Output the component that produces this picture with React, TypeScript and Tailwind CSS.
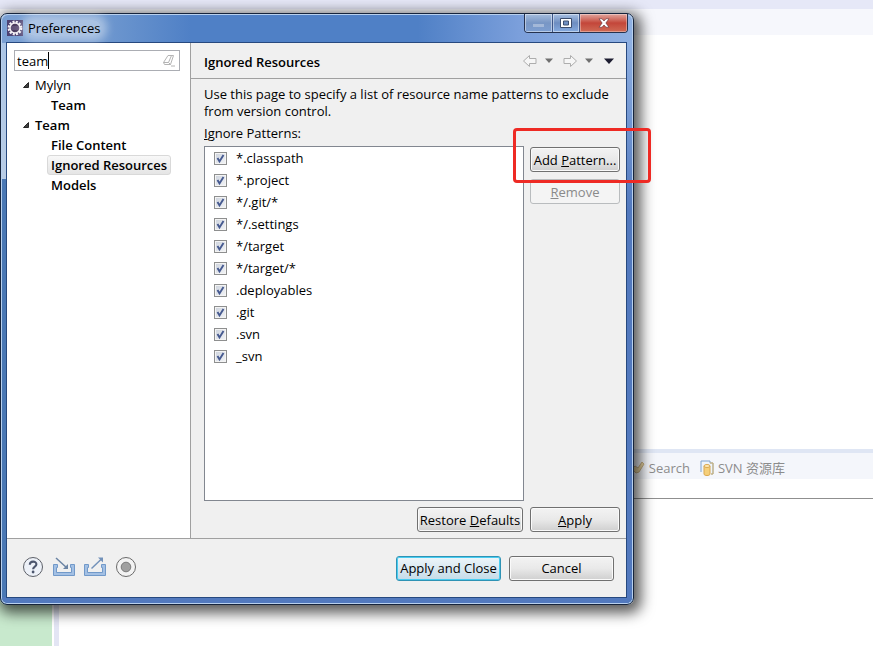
import type { ReactNode } from 'react';

const patterns = [
  '*.classpath',
  '*.project',
  '*/.git/*',
  '*/.settings',
  '*/target',
  '*/target/*',
  '.deployables',
  '.git',
  '.svn',
  '_svn',
];

const tree = [
  { name: 'Mylyn', matches: false, children: ['Team'] },
  {
    name: 'Team',
    matches: true,
    children: ['File Content', 'Ignored Resources', 'Models'],
  },
];

const selected = 'Ignored Resources';

function Button({
  children,
  className,
  disabled,
}: {
  children: ReactNode;
  className: string;
  disabled?: boolean;
}) {
  return (
    <button
      type="button"
      disabled={disabled}
      className={`h-[25px] rounded-[3px] border text-center whitespace-nowrap ${className}`}
    >
      {children}
    </button>
  );
}

const normal =
  'border-[#707070] bg-linear-to-b from-[#f3f3f3] from-0% via-[#e9e9e9] via-50% to-[#cfcfcf] to-100% shadow-[inset_0_0_0_1px_#fafafa]';

function EclipseIcon() {
  return (
    <svg viewBox="0 0 16 16" className="size-4">
      <rect width="16" height="16" fill="#4d4272" />
      <circle cx="8" cy="8" r="6.2" fill="none" stroke="#f4f0f4" strokeWidth="2.4" strokeDasharray="2 1.25" />
      <circle cx="8" cy="8" r="5" fill="#4a3a5c" stroke="#f4f0f4" strokeWidth="1.4" />
      <path d="M4 7h8M4 9h8" stroke="#8b7fa8" strokeWidth=".7" />
    </svg>
  );
}

function TitleBar() {
  return (
    <div className="-mr-px flex h-7 items-start justify-between pl-px">
      <div className="flex items-center gap-1 pt-[6px]">
        <EclipseIcon />
        <h1 className="rounded-full bg-white/40 px-px text-[13px] leading-4 shadow-[0_0_9px_6px_rgba(255,255,255,0.4)]">
          Preferences
        </h1>
      </div>
      <div className="flex h-[19px] w-[104px] overflow-hidden rounded-b-[4px] border border-t-0 border-[#25324f] text-white">
        <button type="button" aria-label="Minimize" className="flex w-7 items-center justify-center border-r border-[#3d5688] bg-linear-to-b from-[#a5bddd] from-0% via-[#7896c4] via-50% to-[#7d9fd2] shadow-[inset_0_0_0_1px_rgba(255,255,255,0.45)]">
          <span className="mt-1 h-[3px] w-[11px] bg-[#a3b8d8]" />
        </button>
        <button type="button" aria-label="Maximize" className="flex w-[27px] items-center justify-center border-r border-[#3d5688] bg-linear-to-b from-[#a9c1e2] from-0% via-[#6d8dc0] via-50% to-[#86abe0] shadow-[inset_0_0_0_1px_rgba(255,255,255,0.45)]">
          <svg viewBox="0 0 12 10" className="h-[10px] w-3">
            <path d="M.5.5h11v9H.5zM3.5 3h5v4h-5z" fill="#fff" stroke="#3b4c6c" fillRule="evenodd" />
          </svg>
        </button>
        <button type="button" aria-label="Close" className="flex flex-1 items-center justify-center bg-linear-to-b from-[#e0a59e] from-0% via-[#c3463a] via-50% to-[#cf6a55] shadow-[inset_0_0_0_1px_rgba(255,255,255,0.35)]">
          <svg viewBox="0 0 12 10" className="h-[10px] w-3">
            <path d="M1 .8h3L6 3 8 .8h3L7.8 5 11 9.2H8L6 7 4 9.2H1L4.2 5z" fill="#fff" stroke="#5c2f35" strokeWidth=".6" />
          </svg>
        </button>
      </div>
    </div>
  );
}

function Sidebar() {
  return (
    <aside className="w-[184px] shrink-0 border-r border-[#a0a0a0] bg-white px-[7px] pt-[7px]">
      <div className="mr-[3px] flex h-[21px] items-center border border-[#abadb3] pr-[3px]">
        <input
          aria-label="Filter preferences"
          defaultValue="team"
          className="field-sizing-content px-0 pl-[2px] outline-none"
        />
        <span className="h-[17px] w-px bg-black" />
        <svg viewBox="0 0 14 14" className="ml-auto size-[14px]" fill="none" stroke="#b4b4b4">
          <path d="M6 1.5h5.5l-3 9h-6l-1-2zM1.5 8.5h5l2 2M6.5 8.5l3-7M9 12h4" />
        </svg>
      </div>
      <ul className="pt-1 leading-5">
        {tree.map(({ name, matches, children }) => (
          <li key={name}>
            <div className="flex items-center gap-[6px] pl-[9px]">
              <svg viewBox="0 0 6 6" className="size-[6px]">
                <path d="M5.5.5v5h-5z" fill="#404040" stroke="#262626" />
              </svg>
              <span className={matches ? 'font-semibold' : ''}>{name}</span>
            </div>
            <ul className="flex flex-col items-start pl-[33px] font-semibold">
              {children.map((child) => (
                <li
                  key={child}
                  className={
                    child === selected
                      ? 'h-5 rounded-[3px] border border-[#d9d9d9] bg-linear-to-b from-[#f8f8f8] to-[#e5e5e5] px-[3px] leading-[18px]'
                      : 'h-5 px-1'
                  }
                >
                  {child}
                </li>
              ))}
            </ul>
          </li>
        ))}
      </ul>
    </aside>
  );
}

function Arrow({ flip, label }: { flip?: boolean; label: string }) {
  return (
    <button type="button" aria-label={label}>
      <svg viewBox="0 0 16 14" className={flip ? 'h-[14px] w-4 -scale-x-100' : 'h-[14px] w-4'}>
        <path d="M1.5 7l6-5.5v3H14v5H7.5v3z" fill="#f6f6f6" stroke="#adadad" strokeLinejoin="round" />
      </svg>
    </button>
  );
}

function Caret({ dark, label }: { dark?: boolean; label: string }) {
  return (
    <button type="button" aria-label={label}>
      <svg viewBox="0 0 10 6" className={dark ? 'h-[6px] w-[10px] text-[#1c1c30]' : 'h-[5px] w-2 text-[#707070]'}>
        <path d="M0 .5h10L5 6z" fill="currentColor" />
      </svg>
    </button>
  );
}

function PatternList() {
  return (
    <ul
      aria-labelledby="patterns-label"
      className="min-h-[355px] flex-1 border border-[#828790] bg-white"
    >
      {patterns.map((pattern) => (
        <li key={pattern}>
          <label className="flex h-[22px] items-center gap-[9px] pl-[9px]">
            <span className="grid size-[13px]">
              <input
                type="checkbox"
                defaultChecked
                className="peer col-start-1 row-start-1 size-[13px] appearance-none border border-[#8e8f8f] bg-linear-to-br from-[#ccd2dc] to-[#f4f5f7] shadow-[inset_0_0_0_1px_#f4f4f4]"
              />
              <svg
                viewBox="0 0 13 13"
                className="pointer-events-none invisible col-start-1 row-start-1 size-[13px] peer-checked:visible"
              >
                <path d="M3.5 6l2 3.5L9.5 3" fill="none" stroke="#465a90" strokeWidth="1.9" />
              </svg>
            </span>
            {pattern}
          </label>
        </li>
      ))}
    </ul>
  );
}

function Page() {
  return (
    <section className="flex min-w-0 flex-1 flex-col">
      <header className="flex h-9 items-center justify-between border-b border-[#a0a0a0] pr-3 pl-[13px]">
        <h2 className="pt-[2px] font-semibold">Ignored Resources</h2>
        <div className="flex items-center gap-[9px]">
          <div className="flex items-center gap-[7px]">
            <Arrow label="Back" />
            <Caret label="Back history" />
          </div>
          <div className="flex items-center gap-[7px] pr-[2px]">
            <Arrow flip label="Forward" />
            <Caret label="Forward history" />
          </div>
          <Caret dark label="Menu" />
        </div>
      </header>
      <div className="flex flex-col pt-[7px] pr-[6px] pb-[6px] pl-[13px]">
        <p className="leading-[17px]">
          Use this page to specify a list of resource name patterns to exclude
          from version control.
        </p>
        <p id="patterns-label" className="py-1 leading-[18px]">
          <u>I</u>gnore Patterns:
        </p>
        <div className="flex gap-[6px]">
          <PatternList />
          <div className="flex w-[90px] flex-col gap-[7px] pt-px">
            <Button className={normal}>
              Add <u>P</u>attern...
            </Button>
            <Button
              disabled
              className="border-[#b9bcbe] bg-[#f4f4f4] text-[#8a8a8a]"
            >
              <u>R</u>emove
            </Button>
          </div>
        </div>
        <div className="flex justify-end gap-[7px] pt-[6px]">
          <Button className={`w-[106px] ${normal}`}>
            Restore <u>D</u>efaults
          </Button>
          <Button className={`w-[90px] ${normal}`}>
            <u>A</u>pply
          </Button>
        </div>
      </div>
    </section>
  );
}

function Footer() {
  return (
    <footer className="flex h-[59px] items-center justify-between border-t border-[#a0a0a0] pr-3 pl-[15px]">
      <div className="flex items-center gap-[9px] pb-[2px]">
        <button type="button" aria-label="Help">
          <svg viewBox="0 0 22 22" className="size-[22px]" fill="none">
            <circle cx="11" cy="11" r="9.5" fill="#edf1f8" stroke="#5d6068" />
            <path d="M7.8 8.8c0-4.2 6.6-4.2 6.6-.5 0 2.5-3.3 2.2-3.3 5" stroke="#4c566e" strokeWidth="2.1" />
            <circle cx="11.1" cy="16" r="1.4" fill="#4c566e" />
          </svg>
        </button>
        <button type="button" aria-label="Import">
          <svg viewBox="0 0 22 20" className="h-5 w-[22px]" fill="none">
            <path d="M.5 7.5h4v3h-1v5h15v-5h-1v-3h4v11H.5z" fill="#a3c0e4" stroke="#7199c9" />
            <path d="M3 1l11 10" stroke="#6b84a4" strokeWidth="1.5" />
            <path d="M15 7v5h-5z" fill="#6b84a4" />
          </svg>
        </button>
        <button type="button" aria-label="Export">
          <svg viewBox="0 0 22 20" className="h-5 w-[22px]" fill="none">
            <path d="M.5 7.5h4v3h-1v5h15v-5h-1v-3h4v11H.5z" fill="#a3c0e4" stroke="#7199c9" />
            <path d="M7.5 11.5L17.5 2" stroke="#7291b9" strokeWidth="1.5" />
            <path d="M14 .5h5v5z" fill="#7291b9" />
          </svg>
        </button>
        <button type="button" aria-label="Record preferences">
          <svg viewBox="0 0 22 22" className="size-[22px]">
            <circle cx="11" cy="11" r="9.5" fill="#f3f3f3" stroke="#6a6a6a" />
            <circle cx="11" cy="11" r="4.8" fill="#a0a0a0" stroke="#7b7b7b" />
          </svg>
        </button>
      </div>
      <div className="flex gap-2">
        <Button className="w-[105px] border-[#2f93b5] bg-linear-to-b from-[#eef6fa] to-[#c4dbe8] shadow-[inset_0_0_0_1px_#48cdf2]">
          Apply and Close
        </Button>
        <Button className={`w-[105px] ${normal}`}>Cancel</Button>
      </div>
    </footer>
  );
}

function Dialog() {
  return (
    <div
      role="dialog"
      aria-label="Preferences"
      className="absolute top-[13px] right-[239px] left-0 isolate rounded-[7px] border border-[#16243c] bg-linear-to-b from-[#a9c4e6] from-0% via-[#b9cde6] via-28% to-[#4a78b4] to-28% pr-[6px] pb-[6px] pl-[5px] shadow-[3px_4px_14px_4px_rgba(0,0,0,0.65),inset_0_0_0_1px_#b8d0ee]"
    >
      {/* title and right edge of the glass frame */}
      <div className="absolute inset-x-px top-px -z-10 h-7 rounded-t-md bg-[linear-gradient(to_right,#7ba0d3,#6f98cf_16%,#4f80c6_30%,#4f80c6_66%,#7b9fdb_82%,#8fb0e2)]" />
      <div className="absolute top-7 right-px bottom-px -z-10 w-[6px] rounded-br-md bg-linear-to-b from-[#8fb0e2] to-[#5279be] to-30%" />
      <div className="absolute inset-x-px bottom-px -z-10 h-[6px] rounded-b-md bg-[#5279be]" />
      <TitleBar />
      <div className="border border-[#27497f] bg-[#f0f0f0]">
        <div className="flex">
          <Sidebar />
          <Page />
        </div>
        <Footer />
      </div>
      {/* callout around the Add Pattern button */}
      <div className="pointer-events-none absolute top-[114px] -right-[18px] h-[55px] w-[138px] rounded-[4px] border-3 border-[#ee2a24]" />
    </div>
  );
}

export default function App() {
  return (
    <main className="relative isolate flex min-h-screen flex-col overflow-hidden bg-white font-['Open_Sans','Noto_Sans_CJK_SC',sans-serif] text-[13px] leading-4 text-black">
      <div className="h-[9px] bg-[#e6e8f7]" />
      <div className="h-[26px] bg-[#f6f7fc]" />
      <div className="flex flex-1">
        <div className="w-[52px] bg-[#c8e9cd]" />
        <div className="ml-[2px] w-[5px] bg-[#e3e5f4]" />
        <div className="flex flex-1 flex-col">
          <div className="h-[414px]" />
          <div className="flex h-[30px] items-center justify-end gap-[10px] border-t-4 border-[#dfe6f4] bg-[#f4f6fb] pt-1 pr-[88px] text-[#8c8c8c]">
            <div className="flex items-center gap-1">
              <svg viewBox="0 0 14 14" className="size-[14px]">
                <path d="M1 8l3-3 3 2 4-6 2 2-5 8-3 1z" fill="#ecd7a2" stroke="#c9b184" />
              </svg>
              Search
            </div>
            <div className="flex items-center gap-1">
              <svg viewBox="0 0 14 16" className="h-4 w-[14px]">
                <path d="M1 12V1h9v2h3v11h-2" fill="#eef4fb" stroke="#7fa3cf" />
                <path d="M10 3h3v11h-2" fill="none" stroke="#d9b56a" />
                <path d="M4 6v8c0 2 6 2 6 0V6" fill="#f5cf7a" stroke="#d9a850" />
                <ellipse cx="7" cy="6" rx="3" ry="1.5" fill="#fdeab8" stroke="#d9a850" />
              </svg>
              SVN 资源库
            </div>
          </div>
          <div className="h-5 border-b border-[#8f8f8f]" />
        </div>
      </div>
      <Dialog />
    </main>
  );
}
